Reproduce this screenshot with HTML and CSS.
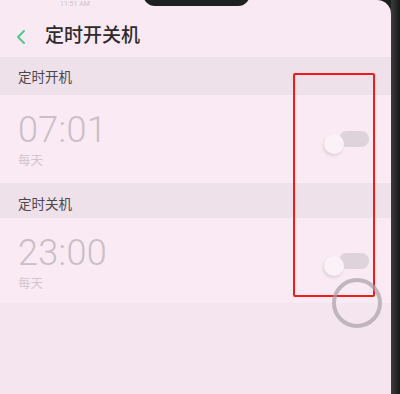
FILE: index.html
```html
<!DOCTYPE html>
<html lang="zh">
<head>
<meta charset="utf-8">
<link rel="stylesheet" href="styles.css">
</head>
<body>
<div class="device">
  <div class="screen">
    <div class="status"><span class="status-time">11:51 AM</span></div>
    <header class="appbar">
      <svg class="back" width="12" height="16" viewBox="0 0 12 16"><path d="M9 2 L3 8 L9 14" fill="none" stroke="#52c98c" stroke-width="2" stroke-linecap="round" stroke-linejoin="round"/></svg>
      <h1 class="title">定时开关机</h1>
    </header>
    <div class="group-label">定时开机</div>
    <div class="row">
      <div class="row-text">
        <div class="time">07:01</div>
        <div class="repeat">每天</div>
      </div>
      <div class="switch"><span class="track"></span><span class="knob"></span></div>
    </div>
    <div class="group-label group-label-2">定时关机</div>
    <div class="row row-2">
      <div class="row-text">
        <div class="time">23:00</div>
        <div class="repeat">每天</div>
      </div>
      <div class="switch"><span class="track"></span><span class="knob"></span></div>
    </div>
    <div class="rest"></div>
    <div class="notch"></div>
    <div class="highlight"></div>
    <div class="touch-ring"></div>
  </div>
  <div class="edge"></div>
</div>
</body>
</html>
```
FILE: styles.css
```css
html, body {
  margin: 0;
  padding: 0;
}
body {
  width: 400px;
  height: 394px;
  overflow: hidden;
  background: #1c1f1e;
  font-family: "Noto Sans CJK SC", "Noto Sans", sans-serif;
}
.device {
  display: flex;
  width: 400px;
  height: 394px;
}
.screen {
  position: relative;
  width: 391px;
  height: 394px;
  background: #f8e9f2;
  border-top-right-radius: 14px;
  display: flex;
  flex-direction: column;
  overflow: hidden;
}
.edge {
  flex: 1;
  background: linear-gradient(90deg, #3a3d3c, #151817);
}
.status {
  height: 18px;
  padding-left: 60px;
  font-family: Roboto, sans-serif;
  font-size: 7px;
  line-height: 8px;
  color: #cfc4cb;
  overflow: hidden;
}
.status-time {
  display: block;
}
.appbar {
  height: 39px;
  display: flex;
  align-items: center;
  padding-left: 15px;
}
.back {
  display: block;
  margin-top: -2px;
}
.title {
  margin: -7px 0 0 18px;
  font-size: 19px;
  font-weight: 500;
  color: #2f2a2e;
  line-height: 24px;
}
.group-label {
  height: 38px;
  background: #efe1ea;
  padding-left: 18px;
  font-size: 13.5px;
  color: #4d474b;
  display: flex;
  align-items: center;
}
.group-label-2 {
  height: 35px;
  padding-top: 5px;
  box-sizing: border-box;
}
.row {
  height: 88px;
  display: flex;
  align-items: flex-start;
  justify-content: space-between;
  padding-left: 18px;
  padding-right: 22px;
  box-sizing: border-box;
  background: #f9eaf4;
}
.row-2 {
  height: 85px;
}
.row-text {
  display: flex;
  flex-direction: column;
  padding-top: 17px;
}
.time {
  font-family: Roboto, sans-serif;
  font-weight: 300;
  font-size: 36px;
  line-height: 36px;
  color: #cbbec7;
  letter-spacing: 0.3px;
}
.repeat {
  font-size: 12.5px;
  line-height: 16px;
  color: #d2c5ce;
  margin-top: 4px;
}
.switch {
  position: relative;
  width: 46px;
  height: 26px;
  margin-top: 36px;
}
.row-2 .switch {
  margin-top: 35px;
}
.track {
  position: absolute;
  right: 0;
  top: 0;
  width: 30px;
  height: 16px;
  border-radius: 8px;
  background: #ded3da;
}
.knob {
  position: absolute;
  left: 1px;
  top: 3px;
  width: 20px;
  height: 20px;
  border-radius: 50%;
  background: #fbf2f8;
  box-shadow: -1px 2px 3px rgba(120, 100, 115, 0.2);
}
.rest {
  flex: 1;
  background: #f5e5ef;
}
.notch {
  position: absolute;
  left: 143px;
  top: -10px;
  width: 107px;
  height: 16px;
  background: #1d2120;
  border-radius: 0 0 12px 12px;
}
.highlight {
  position: absolute;
  left: 293px;
  top: 73px;
  width: 78px;
  height: 220px;
  border: 2.5px solid #f21a1a;
  border-radius: 2px;
}
.touch-ring {
  position: absolute;
  left: 332px;
  top: 278px;
  width: 42px;
  height: 42px;
  border: 4px solid rgba(170, 160, 168, 0.7);
  border-radius: 50%;
}
```
